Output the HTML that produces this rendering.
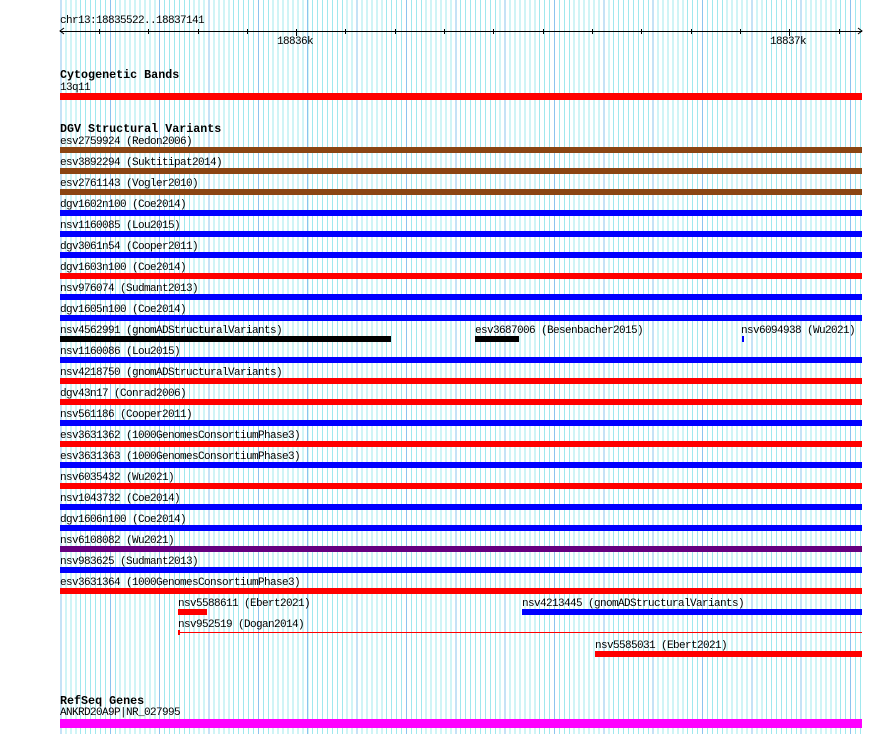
<!DOCTYPE html>
<html><head><meta charset="utf-8"><style>
html,body{margin:0;padding:0;background:#fff;}
#c{position:relative;width:890px;height:734px;overflow:hidden;background:#fff;}
#grid{position:absolute;left:59px;top:0;width:804px;height:734px;
background:
repeating-linear-gradient(90deg,#8cc4ee 0,#8cc4ee 1px,transparent 1px,transparent 49.35px),
repeating-linear-gradient(90deg,#a0e8ee 0,#a0e8ee 1px,transparent 1px,transparent 4.935px);
background-position:1.5px 0,1.5px 0;}
.t{position:absolute;font-family:"Liberation Mono",monospace;font-size:11px;letter-spacing:-0.6px;line-height:11px;color:#000;white-space:pre;margin-top:2px;}
.h{font-weight:bold;font-size:11.7px;letter-spacing:0;margin-top:3px;}
.b{position:absolute;height:6px;}
</style></head><body><div id="c">
<div id="grid"></div>
<div class="t" style="left:60px;top:14px">chr13:18835522..18837141</div>
<div style="position:absolute;left:60px;top:31px;width:802px;height:1px;background:#000"></div>
<svg style="position:absolute;left:0;top:0" width="890" height="40"><path d="M64 28 L60 31 L64 34 M858 28 L862 31 L858 34" stroke="#000" fill="none" stroke-width="1"/></svg>
<div style="position:absolute;left:99px;top:29px;width:1px;height:5px;background:#000"></div>
<div style="position:absolute;left:148px;top:29px;width:1px;height:5px;background:#000"></div>
<div style="position:absolute;left:198px;top:29px;width:1px;height:5px;background:#000"></div>
<div style="position:absolute;left:247px;top:29px;width:1px;height:5px;background:#000"></div>
<div style="position:absolute;left:296px;top:29px;width:1px;height:7px;background:#000"></div>
<div style="position:absolute;left:345px;top:29px;width:1px;height:5px;background:#000"></div>
<div style="position:absolute;left:395px;top:29px;width:1px;height:5px;background:#000"></div>
<div style="position:absolute;left:444px;top:29px;width:1px;height:5px;background:#000"></div>
<div style="position:absolute;left:493px;top:29px;width:1px;height:5px;background:#000"></div>
<div style="position:absolute;left:543px;top:29px;width:1px;height:5px;background:#000"></div>
<div style="position:absolute;left:592px;top:29px;width:1px;height:5px;background:#000"></div>
<div style="position:absolute;left:641px;top:29px;width:1px;height:5px;background:#000"></div>
<div style="position:absolute;left:691px;top:29px;width:1px;height:5px;background:#000"></div>
<div style="position:absolute;left:740px;top:29px;width:1px;height:5px;background:#000"></div>
<div style="position:absolute;left:789px;top:29px;width:1px;height:7px;background:#000"></div>
<div style="position:absolute;left:839px;top:29px;width:1px;height:5px;background:#000"></div>
<div class="t" style="left:277px;top:35px">18836k</div>
<div class="t" style="left:770px;top:35px">18837k</div>

<div class="t h" style="left:60px;top:67px">Cytogenetic Bands</div>
<div class="t" style="left:60px;top:81px">13q11</div>
<div class="b" style="left:60px;top:93px;width:802px;height:7px;background:#f00"></div>

<div class="t h" style="left:60px;top:121px">DGV Structural Variants</div>

<div class="t" style="left:60px;top:135px">esv2759924 (Redon2006)</div><div class="b" style="left:60px;top:147px;width:802px;background:#8b4513"></div>
<div class="t" style="left:60px;top:156px">esv3892294 (Suktitipat2014)</div><div class="b" style="left:60px;top:168px;width:802px;background:#8b4513"></div>
<div class="t" style="left:60px;top:177px">esv2761143 (Vogler2010)</div><div class="b" style="left:60px;top:189px;width:802px;background:#8b4513"></div>
<div class="t" style="left:60px;top:198px">dgv1602n100 (Coe2014)</div><div class="b" style="left:60px;top:210px;width:802px;background:#00f"></div>
<div class="t" style="left:60px;top:219px">nsv1160085 (Lou2015)</div><div class="b" style="left:60px;top:231px;width:802px;background:#00f"></div>
<div class="t" style="left:60px;top:240px">dgv3061n54 (Cooper2011)</div><div class="b" style="left:60px;top:252px;width:802px;background:#00f"></div>
<div class="t" style="left:60px;top:261px">dgv1603n100 (Coe2014)</div><div class="b" style="left:60px;top:273px;width:802px;background:#f00"></div>
<div class="t" style="left:60px;top:282px">nsv976074 (Sudmant2013)</div><div class="b" style="left:60px;top:294px;width:802px;background:#00f"></div>
<div class="t" style="left:60px;top:303px">dgv1605n100 (Coe2014)</div><div class="b" style="left:60px;top:315px;width:802px;background:#00f"></div>
<div class="t" style="left:60px;top:324px">nsv4562991 (gnomADStructuralVariants)</div><div class="b" style="left:60px;top:336px;width:331px;background:#000"></div>
<div class="t" style="left:475px;top:324px">esv3687006 (Besenbacher2015)</div><div class="b" style="left:475px;top:336px;width:44px;background:#000"></div>
<div class="t" style="left:741px;top:324px">nsv6094938 (Wu2021)</div><div class="b" style="left:742px;top:336px;width:2px;background:#00f"></div>
<div class="t" style="left:60px;top:345px">nsv1160086 (Lou2015)</div><div class="b" style="left:60px;top:357px;width:802px;background:#00f"></div>
<div class="t" style="left:60px;top:366px">nsv4218750 (gnomADStructuralVariants)</div><div class="b" style="left:60px;top:378px;width:802px;background:#f00"></div>
<div class="t" style="left:60px;top:387px">dgv43n17 (Conrad2006)</div><div class="b" style="left:60px;top:399px;width:802px;background:#f00"></div>
<div class="t" style="left:60px;top:408px">nsv561186 (Cooper2011)</div><div class="b" style="left:60px;top:420px;width:802px;background:#00f"></div>
<div class="t" style="left:60px;top:429px">esv3631362 (1000GenomesConsortiumPhase3)</div><div class="b" style="left:60px;top:441px;width:802px;background:#f00"></div>
<div class="t" style="left:60px;top:450px">esv3631363 (1000GenomesConsortiumPhase3)</div><div class="b" style="left:60px;top:462px;width:802px;background:#00f"></div>
<div class="t" style="left:60px;top:471px">nsv6035432 (Wu2021)</div><div class="b" style="left:60px;top:483px;width:802px;background:#f00"></div>
<div class="t" style="left:60px;top:492px">nsv1043732 (Coe2014)</div><div class="b" style="left:60px;top:504px;width:802px;background:#00f"></div>
<div class="t" style="left:60px;top:513px">dgv1606n100 (Coe2014)</div><div class="b" style="left:60px;top:525px;width:802px;background:#00f"></div>
<div class="t" style="left:60px;top:534px">nsv6108082 (Wu2021)</div><div class="b" style="left:60px;top:546px;width:802px;background:#660080"></div>
<div class="t" style="left:60px;top:555px">nsv983625 (Sudmant2013)</div><div class="b" style="left:60px;top:567px;width:802px;background:#00f"></div>
<div class="t" style="left:60px;top:576px">esv3631364 (1000GenomesConsortiumPhase3)</div><div class="b" style="left:60px;top:588px;width:802px;background:#f00"></div>

<div class="t" style="left:178px;top:597px">nsv5588611 (Ebert2021)</div><div class="b" style="left:178px;top:609px;width:29px;background:#f00"></div>
<div class="t" style="left:522px;top:597px">nsv4213445 (gnomADStructuralVariants)</div><div class="b" style="left:522px;top:609px;width:340px;background:#00f"></div>
<div class="t" style="left:178px;top:618px">nsv952519 (Dogan2014)</div>
<div style="position:absolute;left:178px;top:632px;width:684px;height:1px;background:#f00"></div>
<div style="position:absolute;left:178px;top:630px;width:2px;height:5px;background:#f00"></div>
<div class="t" style="left:595px;top:639px">nsv5585031 (Ebert2021)</div><div class="b" style="left:595px;top:651px;width:267px;background:#f00"></div>

<div class="t h" style="left:60px;top:693px">RefSeq Genes</div>
<div class="t" style="left:60px;top:706px">ANKRD20A9P|NR_027995</div>
<div class="b" style="left:60px;top:719px;width:802px;height:9px;background:#f0f"></div>
</div></body></html>
